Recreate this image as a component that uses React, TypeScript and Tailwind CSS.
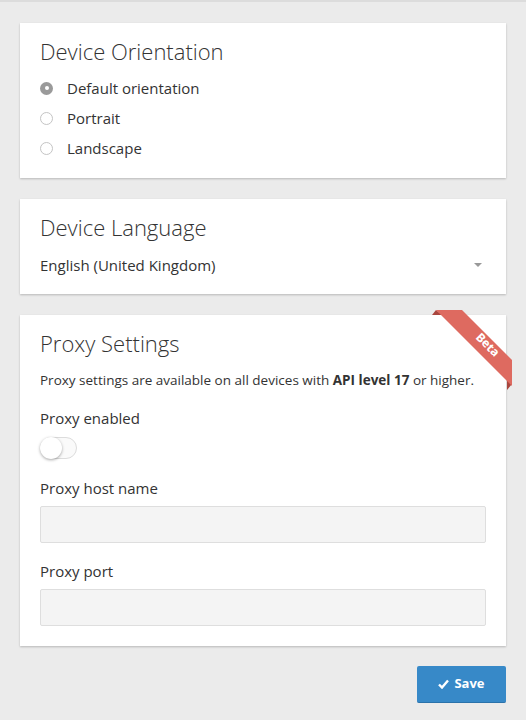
import React from "react";

function Radio({ checked, label }: { checked?: boolean; label: string }) {
  return (
    <label className="flex items-center h-[30px] gap-[14px]">
      {checked ? (
        <span className="w-[13px] h-[13px] rounded-full bg-[#9a9a9a] flex items-center justify-center">
          <span className="w-[4px] h-[4px] rounded-full bg-white" />
        </span>
      ) : (
        <span className="w-[13px] h-[13px] rounded-full border border-[#c4c4c4] bg-white" />
      )}
      <span className="text-[15px] text-[#333]">{label}</span>
    </label>
  );
}

function Card({ children, className = "" }: { children: React.ReactNode; className?: string }) {
  return (
    <div className={"relative bg-white shadow-[0_1px_2px_rgba(0,0,0,0.22)] px-[20px] " + className}>
      {children}
    </div>
  );
}

export default function App() {
  return (
    <div
      className="min-h-[720px] w-[526px] bg-[#ebebeb] border-t-2 border-[#dcdcdc] px-[20px] pt-[21px]"
      style={{ fontFamily: '"Open Sans", "Noto Sans", sans-serif' }}
    >
      <Card className="pt-[13px] pb-[15px]">
        <h2 className="text-[22px] font-light text-[#333] leading-[30px]">Device Orientation</h2>
        <div className="mt-[7px] flex flex-col">
          <Radio checked label="Default orientation" />
          <Radio label="Portrait" />
          <Radio label="Landscape" />
        </div>
      </Card>

      <Card className="mt-[21px] pt-[13px] pb-[15px]">
        <h2 className="text-[22px] font-light text-[#333] leading-[30px]">Device Language</h2>
        <div className="mt-[9px] flex items-center justify-between h-[28px]">
          <span className="text-[15px] text-[#333]">English (United Kingdom)</span>
          <span className="w-0 h-0 border-l-[4px] border-r-[4px] border-t-[4px] border-l-transparent border-r-transparent border-t-[#999] mr-[4px]" />
        </div>
      </Card>

      <Card className="mt-[21px] pt-[13px] pb-[20px]">
        <svg
          className="absolute left-[410px] top-[-7px] overflow-visible"
          width="84"
          height="84"
          viewBox="0 0 84 84"
        >
          <polygon points="2,7 6,2 12,7" fill="#a9463e" />
          <polygon points="77,71 82,76 77,82" fill="#a9463e" />
          <polygon points="6,2 32,2 82,52 82,78" fill="#de6a60" />
        </svg>
        <span className="absolute left-[448px] top-[23px] w-[40px] text-center text-[12px] font-bold text-white rotate-45 leading-[13px]">
          Beta
        </span>
        <h2 className="text-[22px] font-light text-[#333] leading-[30px]">Proxy Settings</h2>
        <p className="mt-[13px] text-[13.5px] text-[#333] leading-[18px]">
          Proxy settings are available on all devices with <b className="font-bold">API level 17</b> or higher.
        </p>
        <div className="mt-[18px] text-[15px] text-[#333] leading-[22px]">Proxy enabled</div>
        <div className="mt-[8px] w-[37px] h-[22px] rounded-full border border-[#dcdcdc] bg-[#fafafa] relative">
          <span className="absolute left-[-1px] top-[-1px] w-[22px] h-[22px] rounded-full bg-white shadow-[0_1px_3px_rgba(0,0,0,0.35)]" />
        </div>
        <div className="mt-[18px] text-[15px] text-[#333] leading-[22px]">Proxy host name</div>
        <div className="mt-[7px] h-[37px] rounded-[2px] border border-[#dedede] bg-[#f4f4f4]" />
        <div className="mt-[17px] text-[15px] text-[#333] leading-[22px]">Proxy port</div>
        <div className="mt-[7px] h-[37px] rounded-[2px] border border-[#dedede] bg-[#f4f4f4]" />
      </Card>

      <div className="flex justify-end mt-[20px]">
        <button className="w-[89px] h-[37px] rounded-[2px] bg-[#3789c8] border-b border-[#2b72aa] text-white text-[13px] font-bold flex items-center justify-center gap-[5px]">
          <svg width="11" height="10" viewBox="0 0 11 10">
            <path d="M1 5.5 L4 8.5 L10 1.5" stroke="white" strokeWidth="2.4" fill="none" />
          </svg>
          Save
        </button>
      </div>
    </div>
  );
}
